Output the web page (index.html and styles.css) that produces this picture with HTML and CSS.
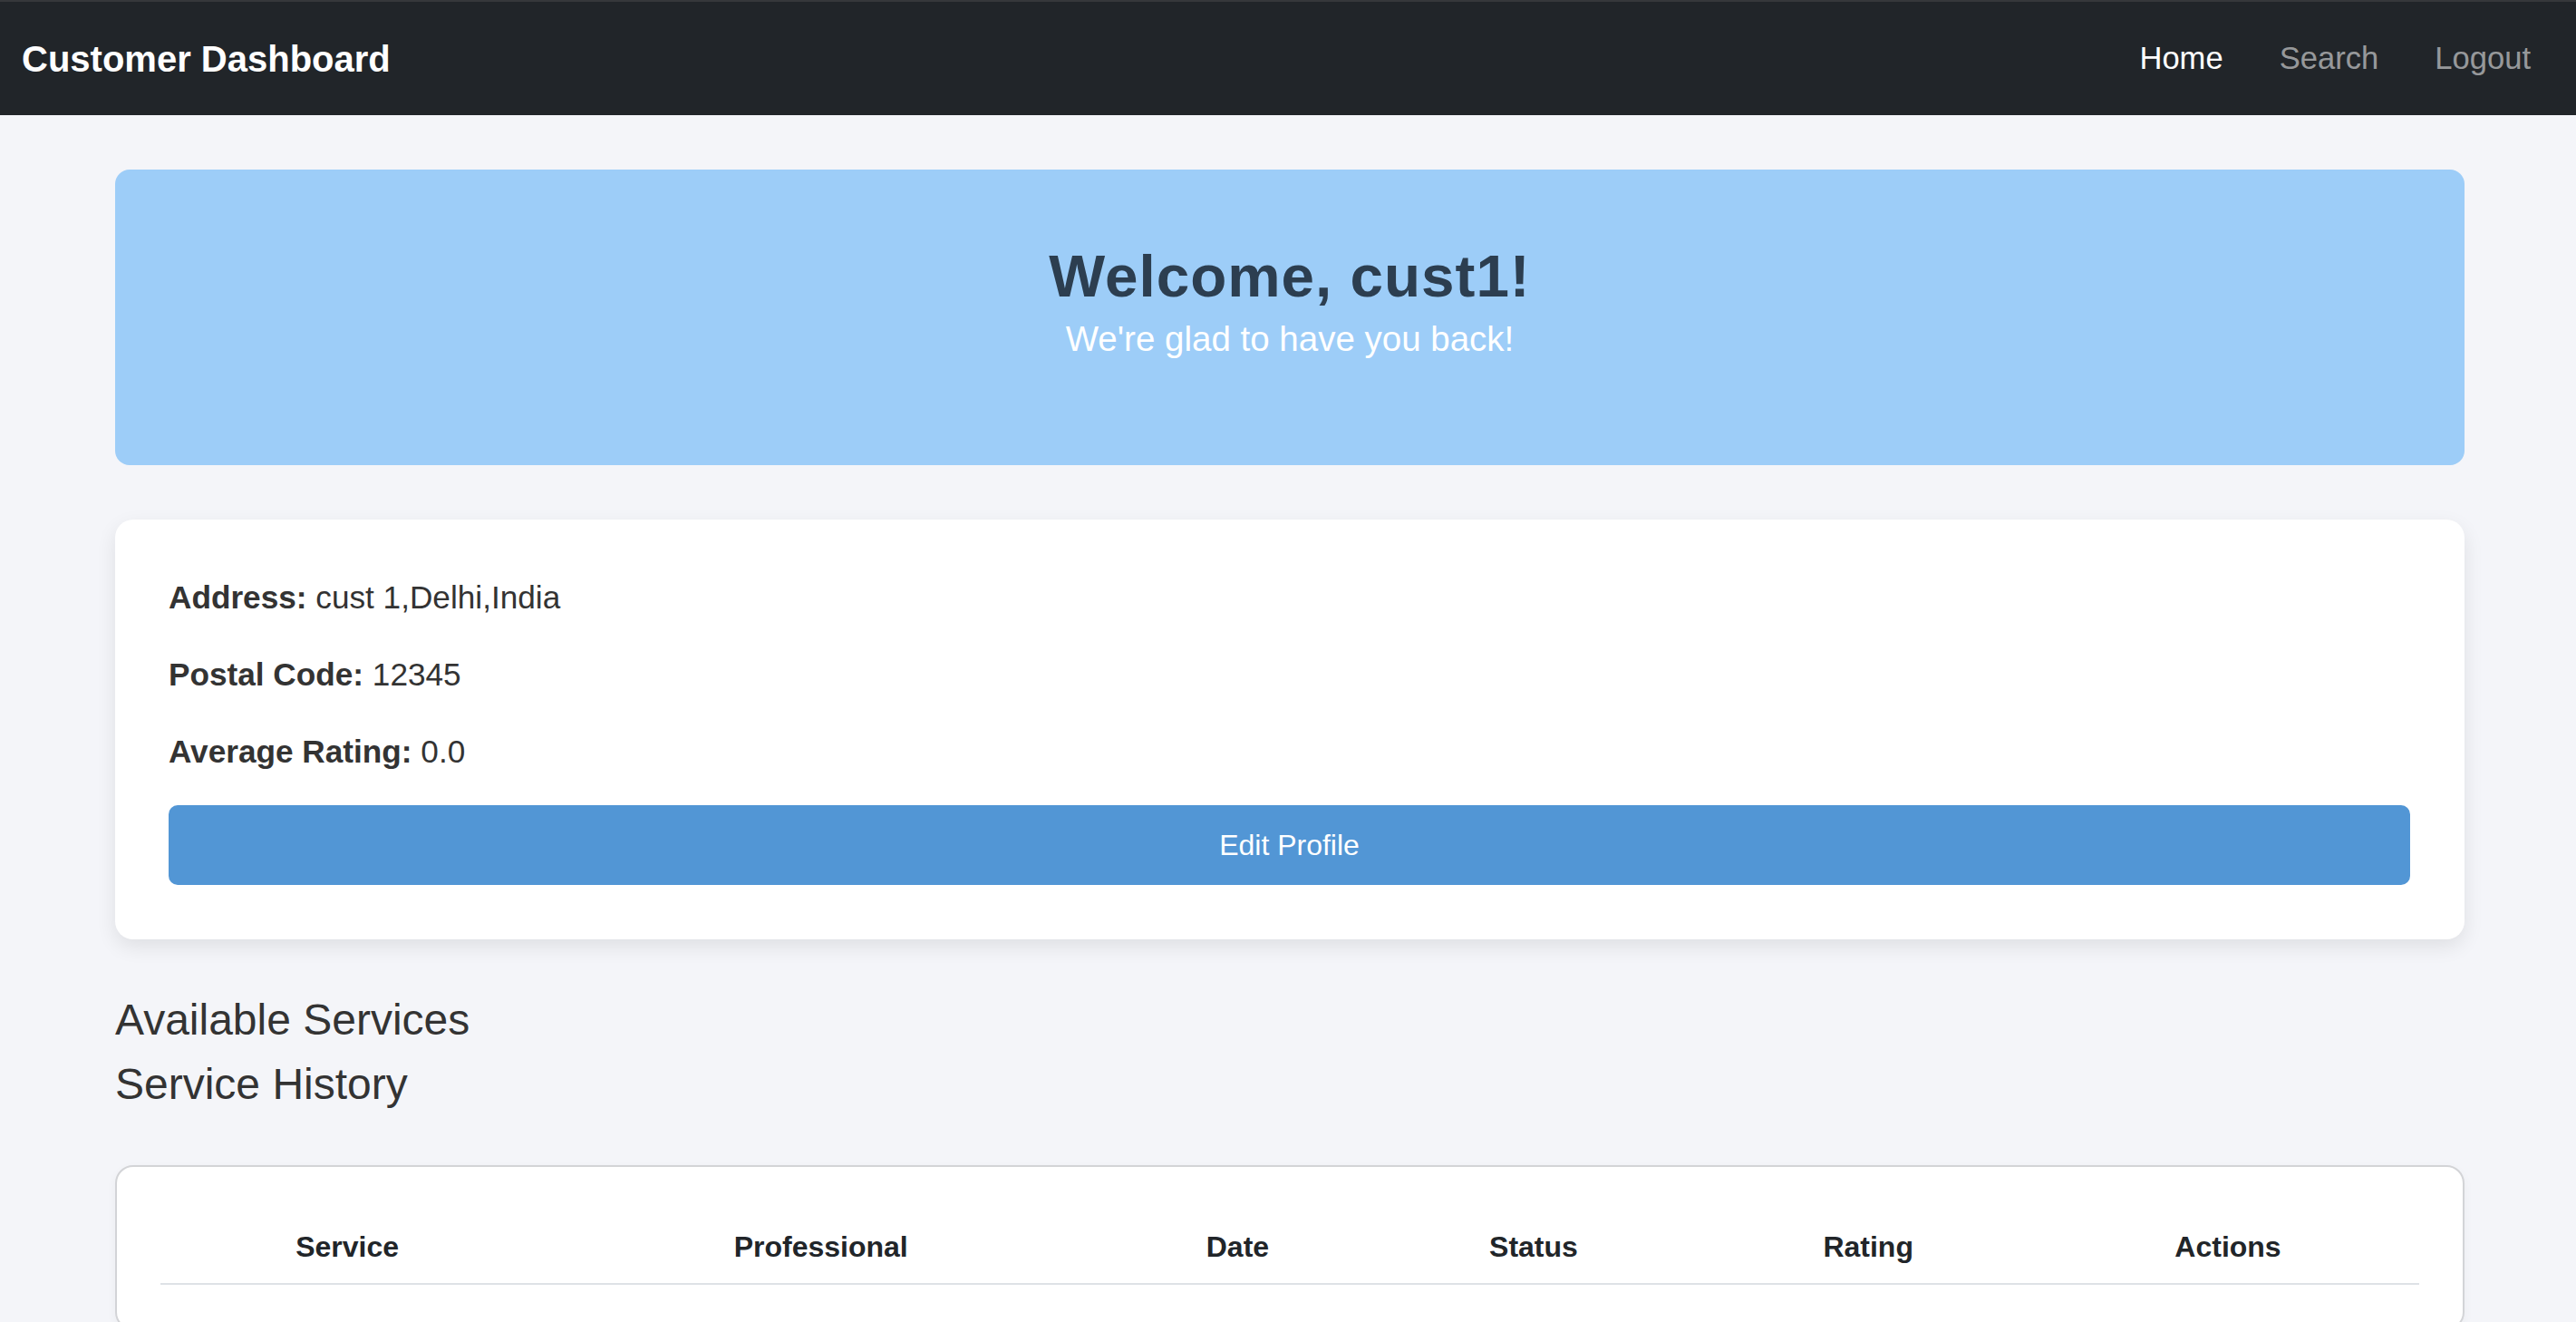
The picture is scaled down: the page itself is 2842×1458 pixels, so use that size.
FILE: index.html
```html
<!DOCTYPE html>
<html lang="en">
<head>
<meta charset="utf-8">
<title>Customer Dashboard</title>
<link rel="stylesheet" href="styles.css">
</head>
<body>
<nav class="navbar">
  <a class="brand" href="#">Customer Dashboard</a>
  <ul class="nav-links">
    <li><a class="nav-link active" href="#">Home</a></li>
    <li><a class="nav-link" href="#">Search</a></li>
    <li><a class="nav-link" href="#">Logout</a></li>
  </ul>
</nav>
<main class="container">
  <section class="welcome">
    <h2 class="welcome-title">Welcome, cust1!</h2>
    <p class="welcome-sub">We're glad to have you back!</p>
  </section>
  <section class="profile-card">
    <p class="info"><strong>Address:</strong> cust 1,Delhi,India</p>
    <p class="info"><strong>Postal Code:</strong> 12345</p>
    <p class="info"><strong>Average Rating:</strong> 0.0</p>
    <button class="btn-edit" type="button">Edit Profile</button>
  </section>
  <h4 class="section-title">Available Services</h4>
  <h4 class="section-title">Service History</h4>
  <section class="table-card">
    <table class="history">
      <thead>
        <tr>
          <th>Service</th>
          <th>Professional</th>
          <th>Date</th>
          <th>Status</th>
          <th>Rating</th>
          <th>Actions</th>
        </tr>
      </thead>
      <tbody></tbody>
    </table>
  </section>
</main>
</body>
</html>
```
FILE: styles.css
```css
* {
  box-sizing: border-box;
}

html {
  overflow: hidden;
}

body {
  margin: 0;
  background: #f4f5f9;
  font-family: "Liberation Sans", Arial, sans-serif;
  color: #333333;
}

.navbar {
  display: flex;
  align-items: center;
  justify-content: space-between;
  height: 127px;
  border-top: 2px solid #36383b;
  background: #212529;
  padding: 0 50px 0 24px;
}

.brand {
  color: #ffffff;
  font-size: 40px;
  font-weight: bold;
  text-decoration: none;
  line-height: 1.5;
}

.nav-links {
  display: flex;
  gap: 62px;
  list-style: none;
  margin: 0;
  padding: 0;
}

.nav-link {
  color: rgba(255, 255, 255, 0.55);
  font-size: 34.6px;
  line-height: 1.5;
  text-decoration: none;
}

.nav-link.active {
  color: #ffffff;
}

.container {
  width: 2592px;
  margin: 0 auto;
  padding-top: 60px;
}

main.container {
  margin-left: calc((100% - 2592px) / 2 + 2px);
}

.welcome {
  background: #9dcdf8;
  border-radius: 16px;
  padding: 79px 0 79px;
  text-align: center;
}

.welcome-title {
  margin: 0;
  font-size: 65.6px;
  line-height: 1.2;
  font-weight: bold;
  letter-spacing: 1px;
  color: #2c3e50;
}

.welcome-sub {
  margin: 0 0 32px;
  font-size: 38.5px;
  line-height: 1.5;
  color: #ffffff;
}

.profile-card {
  margin-top: 60px;
  background: #ffffff;
  border-radius: 20px;
  padding: 60px 60px 60px 59px;
  box-shadow: 0 8px 22px rgba(0, 0, 0, 0.09);
}

.info {
  margin: 0 0 32px;
  font-size: 35.2px;
  line-height: 1.5;
  color: #333333;
}

.info strong {
  font-weight: bold;
}

.btn-edit {
  display: block;
  width: 100%;
  border: none;
  border-radius: 10px;
  background: #5296d5;
  color: #ffffff;
  font-family: "Liberation Sans", Arial, sans-serif;
  font-size: 32px;
  line-height: 48px;
  padding: 20px 0;
  cursor: pointer;
}

.section-title {
  margin: 0 0 14px;
  font-size: 48px;
  line-height: 1.2;
  font-weight: normal;
  color: #333333;
}

.profile-card + .section-title {
  margin-top: 60px;
}

.table-card {
  margin-top: 60px;
  background: #ffffff;
  border: 2px solid #d3d4d7;
  border-radius: 20px;
  padding: 48px;
  box-shadow: 0 4px 12px rgba(0, 0, 0, 0.04);
}

.history {
  width: 100%;
  border-collapse: collapse;
}

.history th {
  padding: 16px;
  font-size: 32px;
  line-height: 1.5;
  font-weight: bold;
  color: #212529;
  text-align: center;
  border-bottom: 2px solid #dee2e6;
}
```
